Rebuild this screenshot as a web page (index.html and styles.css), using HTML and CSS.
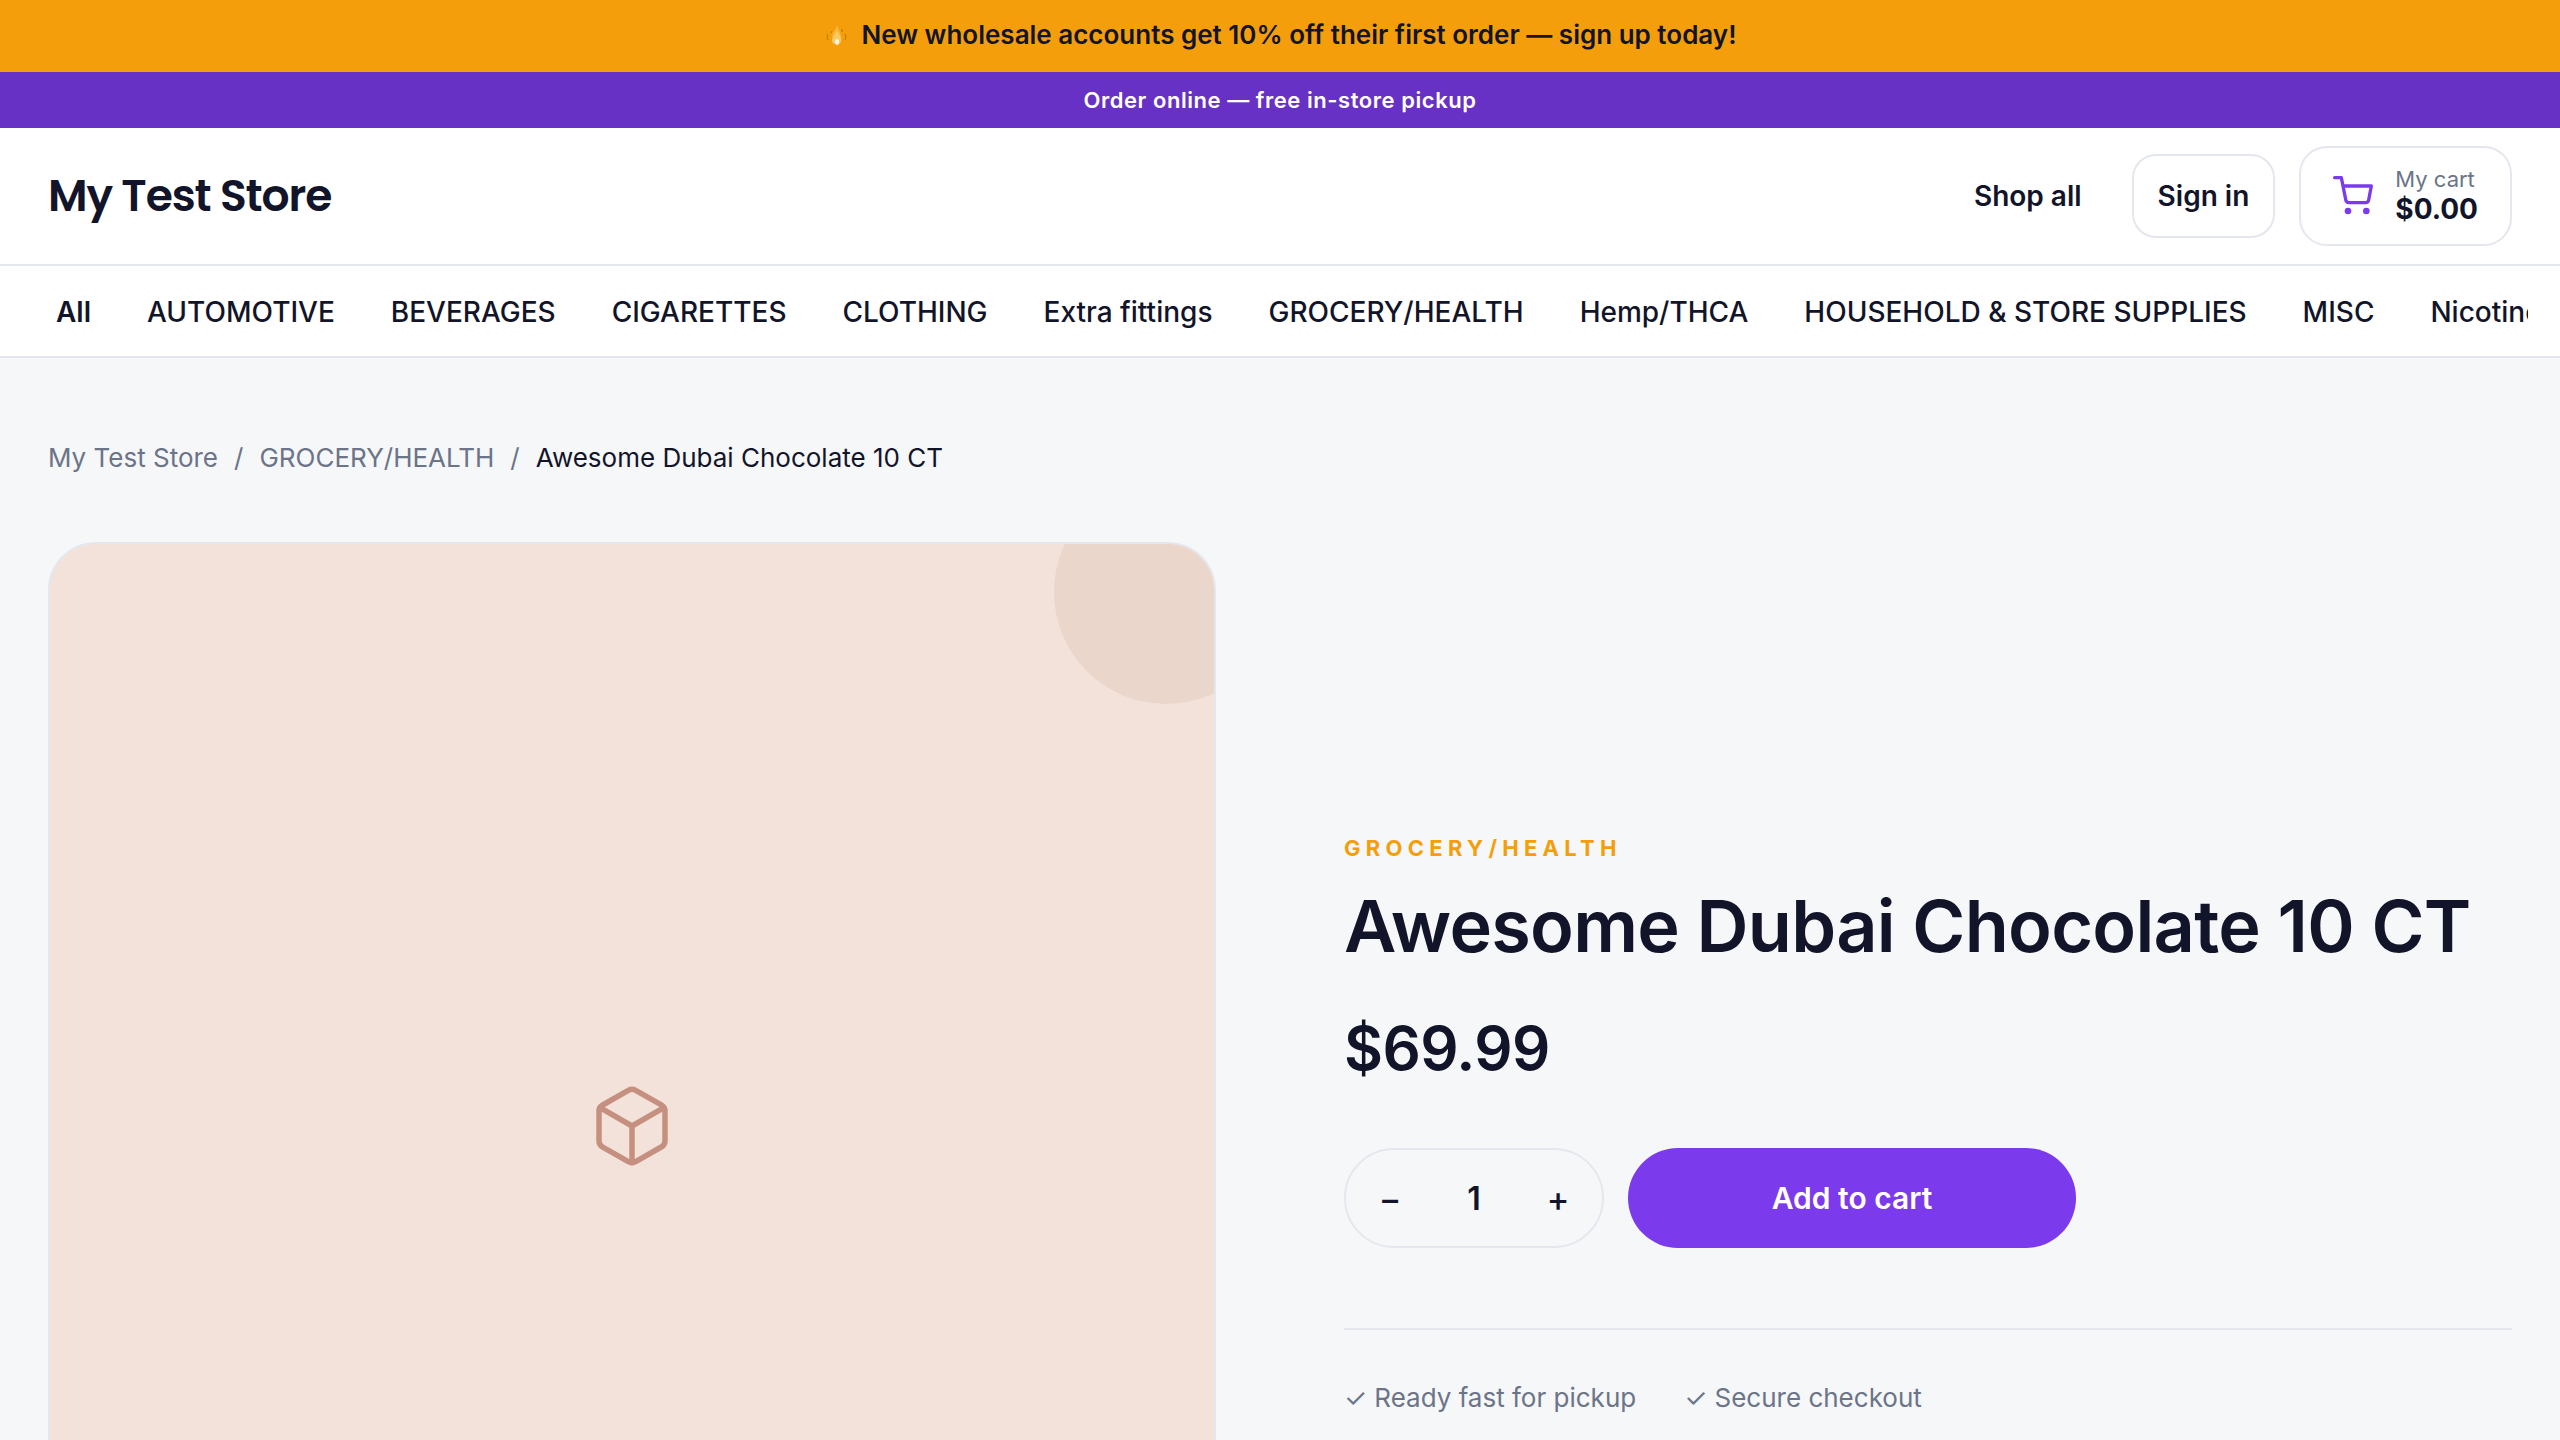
FILE: index.html
```html
<!DOCTYPE html>
<html lang="en">
<head>
    <meta charset="UTF-8">
    <meta name="viewport" content="width=device-width, initial-scale=1.0">
    <title>Awesome Dubai Chocolate 10 CT - My Test Store</title>
    <link rel="stylesheet" href="styles.css">
</head>
<body>
<div class="promo-bar">
    <svg class="flame" viewBox="0 0 26 26" aria-hidden="true">
        <path fill="none" stroke="#b8720f" stroke-width="1" d="M4 12c-1 2-1 4 0 6M21 12c1 2 1 4 0 6M8 9l-1 2M18 7v3"/>
        <path fill="#f8b63c" d="M13 3c1 4 4 7 4 12H8c0-5 4-7 5-12z"/>
        <path fill="#fbc964" d="M13 8c1 4 5 6 4 12a5 4 0 0 1-9 0c-1-5 4-7 5-12z"/>
        <ellipse fill="#fff3e4" cx="13" cy="20" rx="2" ry="3"/>
    </svg>
    <span>New wholesale accounts get 10% off their first order — sign up today!</span>
</div>
<div class="pickup-bar">Order online — free in-store pickup</div>

<header class="header">
    <a class="logo" href="#">My Test Store</a>
    <div class="header-actions">
        <a class="shop-link" href="#">Shop all</a>
        <a class="sign-in" href="#">Sign in</a>
        <button class="cart" type="button">
            <svg class="cart-icon" viewBox="0 0 24 24" aria-hidden="true">
                <circle cx="9" cy="21" r="1"/>
                <circle cx="20" cy="21" r="1"/>
                <path d="M1 1h4l2.680 13.390a2 2 0 0 0 2 1.610h9.720a2 2 0 0 0 2-1.610L23 6H6"/>
            </svg>
            <span class="cart-text">
                <span class="cart-label">My cart</span>
                <span class="cart-total">$0.00</span>
            </span>
        </button>
    </div>
</header>

<nav class="categories">
    <div class="category-list">
        <a class="active" href="#">All</a>
        <a href="#">AUTOMOTIVE</a>
        <a href="#">BEVERAGES</a>
        <a href="#">CIGARETTES</a>
        <a href="#">CLOTHING</a>
        <a href="#">Extra fittings</a>
        <a href="#">GROCERY/HEALTH</a>
        <a href="#">Hemp/THCA</a>
        <a href="#">HOUSEHOLD &amp; STORE SUPPLIES</a>
        <a href="#">MISC</a>
        <a href="#">Nicotine</a>
    </div>
</nav>

<main class="page">
    <nav class="breadcrumbs" aria-label="Breadcrumb">
        <a href="#">My Test Store</a>
        <span>/</span>
        <a href="#">GROCERY/HEALTH</a>
        <span>/</span>
        <span class="current">Awesome Dubai Chocolate 10 CT</span>
    </nav>

    <div class="product">
        <div class="product-image">
            <svg class="box-icon" viewBox="0 0 24 24" aria-hidden="true">
                <path d="M21 16V8a2 2 0 0 0-1-1.730l-7-4a2 2 0 0 0-2 0l-7 4A2 2 0 0 0 3 8v8a2 2 0 0 0 1 1.730l7 4a2 2 0 0 0 2 0l7-4A2 2 0 0 0 21 16z"/>
                <path d="M3.300 7L12 12l8.700-5M12 22V12"/>
            </svg>
        </div>

        <div class="product-info">
            <p class="product-category">GROCERY/HEALTH</p>
            <h1 class="product-title">Awesome Dubai Chocolate 10 CT</h1>
            <p class="product-price">$69.99</p>
            <div class="buy-row">
                <div class="quantity">
                    <button type="button" id="minus" aria-label="Decrease quantity">−</button>
                    <input type="text" id="quantity" value="1" aria-label="Quantity">
                    <button type="button" id="plus" aria-label="Increase quantity">+</button>
                </div>
                <button class="add-to-cart" type="button">Add to cart</button>
            </div>
            <div class="perks">
                <span>✓ Ready fast for pickup</span>
                <span>✓ Secure checkout</span>
            </div>
        </div>
    </div>
</main>

<script>
    const quantity = document.getElementById('quantity');

    function changeQuantity(step) {
        const value = parseInt(quantity.value, 10) || 1;
        quantity.value = Math.max(1, value + step);
    }

    document.getElementById('minus').addEventListener('click', () => changeQuantity(-1));
    document.getElementById('plus').addEventListener('click', () => changeQuantity(1));
</script>
</body>
</html>
```
FILE: styles.css
```css
* {
    box-sizing: border-box;
}

body {
    margin: 0;
    background-color: #f6f7f9;
    color: #12152a;
    font-family: Inter, sans-serif;
    font-size: 28px;
    overflow-x: hidden;
}

a {
    color: inherit;
    text-decoration: none;
}

button,
input {
    font-family: inherit;
    color: inherit;
}

button {
    cursor: pointer;
}

.promo-bar {
    display: flex;
    align-items: center;
    justify-content: center;
    gap: 12px;
    padding: 15px 48px 17px;
    background-color: #f59e0b;
    font-size: 26px;
    font-weight: 600;
    line-height: 40px;
}

.flame {
    width: 26px;
    height: 26px;
}

.pickup-bar {
    padding: 12px 48px;
    background-color: #6731c6;
    color: #fff;
    font-size: 22px;
    font-weight: 600;
    line-height: 32px;
    letter-spacing: 0.025em;
    text-align: center;
}

.header {
    display: flex;
    align-items: center;
    justify-content: space-between;
    padding: 18px 48px;
    background-color: #fff;
    border-bottom: 2px solid #e5e7ee;
}

.logo {
    font-family: Poppins, Inter, sans-serif;
    font-size: 44px;
    font-weight: 600;
    line-height: 64px;
    letter-spacing: -0.025em;
}

.header-actions {
    display: flex;
    align-items: center;
    gap: 24px;
}

.shop-link,
.sign-in {
    padding: 24px;
    border: 2px solid transparent;
    border-radius: 24px;
    font-weight: 600;
    line-height: 32px;
}

.sign-in {
    border-color: #e5e7ee;
}

.cart {
    display: flex;
    align-items: center;
    gap: 22px;
    padding: 18px 32px;
    background-color: #fff;
    border: 2px solid #e5e7ee;
    border-radius: 28px;
    text-align: left;
}

.cart-icon {
    width: 40px;
    height: 40px;
    fill: none;
    stroke: #7c3aed;
    stroke-width: 2;
    stroke-linecap: round;
    stroke-linejoin: round;
    overflow: visible;
}

.cart-text {
    display: flex;
    flex-direction: column;
}

.cart-label {
    color: #6b7488;
    font-size: 22px;
    line-height: 26px;
}

.cart-total {
    font-size: 28px;
    font-weight: 700;
    line-height: 34px;
}

.categories {
    padding: 0 32px;
    background-color: #fff;
    border-bottom: 2px solid #e5e7ee;
}

.category-list {
    display: flex;
    gap: 8px;
    overflow: hidden;
}

.category-list a {
    padding: 29px 24px 27px;
    font-weight: 500;
    line-height: 34px;
    white-space: nowrap;
}

.category-list .active {
    font-weight: 600;
}

.page {
    padding: 80px 48px;
}

.breadcrumbs {
    display: flex;
    gap: 16px;
    margin-bottom: 64px;
    color: #6b7488;
    font-size: 26px;
    line-height: 40px;
}

.breadcrumbs .current {
    color: #12152a;
}

.product {
    display: grid;
    grid-template-columns: 1fr 1fr;
    align-items: center;
    gap: 128px;
}

.product-image {
    position: relative;
    display: flex;
    align-items: center;
    justify-content: center;
    aspect-ratio: 1;
    background-color: #f3e2da;
    border: 2px solid #e5e7ee;
    border-radius: 48px;
    overflow: hidden;
}

.product-image::before {
    content: "";
    position: absolute;
    top: -64px;
    right: -64px;
    width: 224px;
    height: 224px;
    border-radius: 50%;
    background-color: #ebd6cb;
}

.box-icon {
    width: 88px;
    height: 88px;
    fill: none;
    stroke: #c69080;
    stroke-width: 1.5;
    stroke-linecap: round;
    stroke-linejoin: round;
}

.product-category {
    margin: 0 0 24px;
    color: #f59e0b;
    font-size: 22px;
    font-weight: 700;
    line-height: 28px;
    letter-spacing: 0.24em;
}

.product-title {
    margin: 0 0 46px;
    font-size: 72px;
    font-weight: 600;
    line-height: 80px;
    letter-spacing: -0.01em;
}

.product-price {
    margin: 0 0 64px;
    font-size: 60px;
    font-weight: 600;
    line-height: 72px;
    letter-spacing: -0.01em;
}

.buy-row {
    display: flex;
    gap: 24px;
    padding-bottom: 80px;
    border-bottom: 2px solid #e5e7ee;
}

.quantity {
    display: flex;
    align-items: center;
    height: 100px;
    border: 2px solid #e5e7ee;
    border-radius: 50px;
}

.quantity button {
    width: 88px;
    height: 88px;
    padding: 0;
    background: none;
    border: none;
    font-size: 34px;
    font-weight: 500;
}

.quantity input {
    width: 80px;
    padding: 0;
    background: none;
    border: none;
    font-size: 32px;
    font-weight: 600;
    text-align: center;
}

.add-to-cart {
    width: 448px;
    height: 100px;
    background-color: #7c3aed;
    border: none;
    border-radius: 50px;
    color: #fff;
    font-size: 30px;
    font-weight: 600;
}

.perks {
    display: flex;
    gap: 48px;
    padding-top: 48px;
    color: #6b7488;
    font-size: 26px;
    line-height: 40px;
}
```
